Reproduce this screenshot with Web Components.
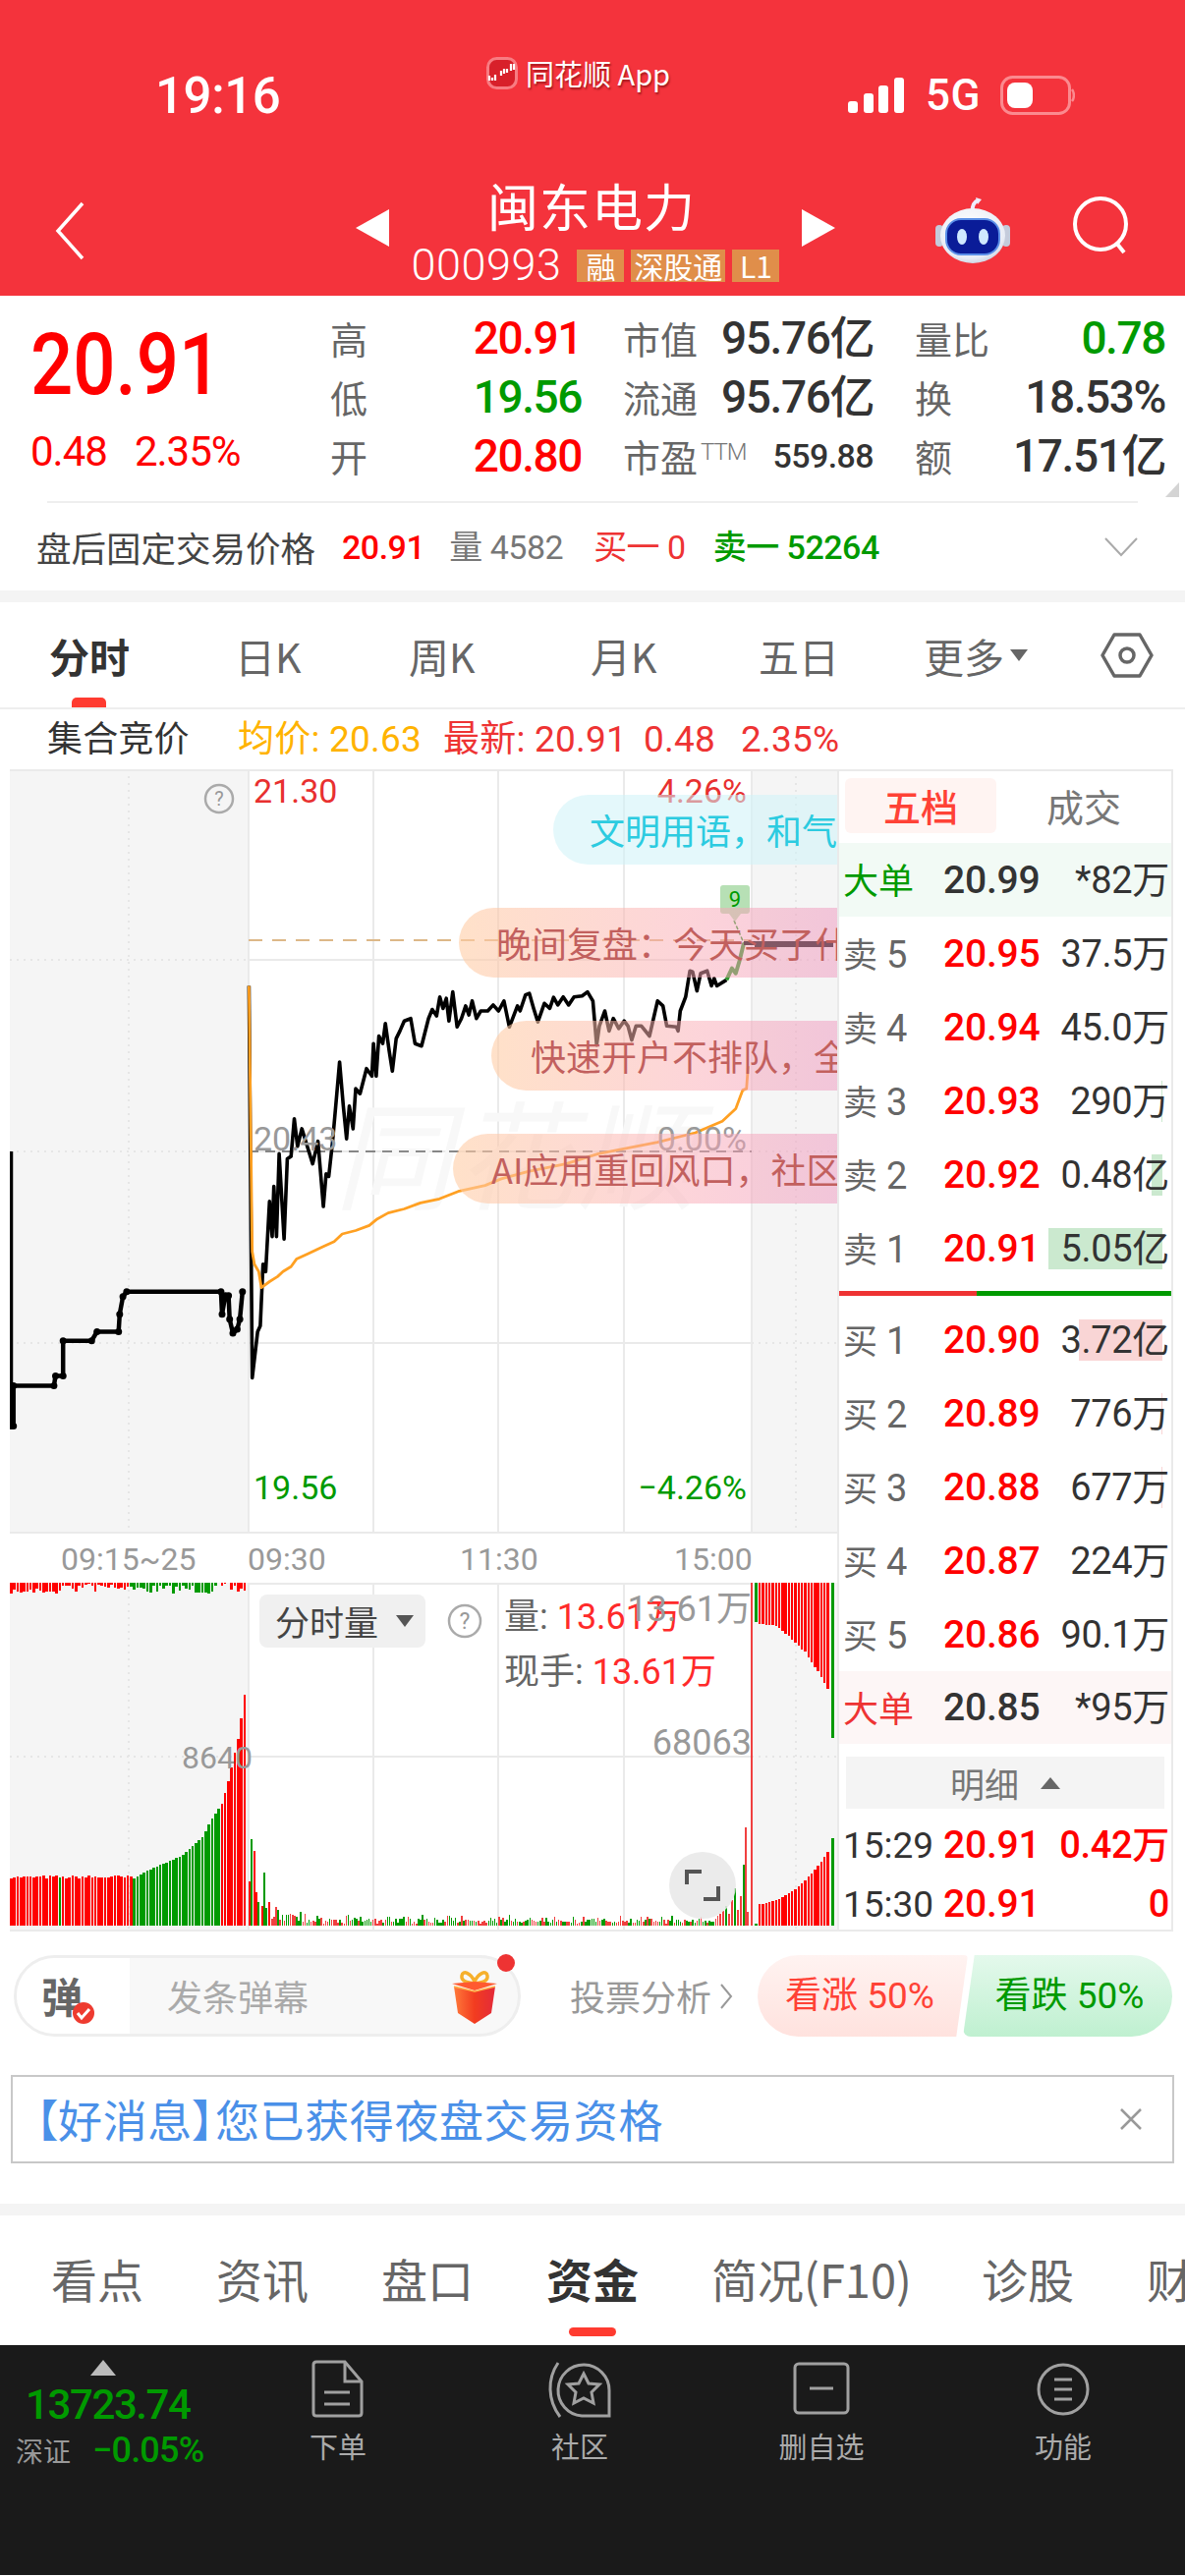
<!DOCTYPE html>
<html lang="zh">
<head>
<meta charset="utf-8">
<title>闽东电力</title>
<style>
  html, body { margin: 0; padding: 0; background: #fff; }
  body {
    width: 1206px;
    height: 2622px;
    overflow: hidden;
    font-family: Roboto, "Noto Sans CJK SC", sans-serif;
    color: #333;
  }
  .chart-row { display: flex; align-items: flex-start; }
</style>
</head>
<body>
  <status-bar></status-bar>
  <stock-header name="闽东电力" code="000993"></stock-header>
  <quote-panel></quote-panel>
  <after-hours></after-hours>
  <period-tabs></period-tabs>
  <auction-line></auction-line>
  <div class="chart-row">
    <time-chart></time-chart>
    <order-book></order-book>
  </div>
  <danmu-bar></danmu-bar>
  <notice-bar>【好消息】您已获得夜盘交易资格</notice-bar>
  <info-tabs></info-tabs>
  <bottom-nav></bottom-nav>

<script>
const RED = "#ff0000";
const GREEN = "#009a00";

class ShadowBase extends HTMLElement {
  constructor() {
    super();
    this.attachShadow({ mode: "open" });
  }
  connectedCallback() {
    this.shadowRoot.innerHTML = this.render();
    if (this.afterRender) this.afterRender();
  }
}

class StatusBar extends ShadowBase {
  render() {
    return `
      <style>
        :host { display: flex; height: 170px; background: #f4333c; color: #fff; box-sizing: border-box; }
        .time { width: 495px; box-sizing: border-box; padding: 68px 0 0 158px; font: 500 51px/60px Roboto, sans-serif; letter-spacing: -.4px; }
        .app { display: flex; align-items: center; gap: 8px; height: 34px; margin-top: 57px; font: 29px/34px "Noto Sans CJK SC", sans-serif; text-shadow: 1px 2px 2px rgba(90,0,0,.55); flex: 1; }
        .right { display: flex; align-items: center; gap: 20px; height: 44px; margin-top: 75px; padding-right: 112px; }
        .g5 { font: 500 44px/44px Roboto, sans-serif; letter-spacing: .5px; }
        .right svg:first-child { margin-right: 2px; }
      </style>
      <div class="time">19:16</div>
      <div class="app">
        <svg width="32" height="33" viewBox="0 0 32 33">
          <rect x="1.5" y="1.5" width="29" height="30" rx="9" fill="#d8202a" stroke="#f87c82" stroke-width="3"/>
          <path d="M3 24v-5M6 24v-3M9 24v-6M15 19v-5M18 17v-5M21 16v-4M25 14V7M28 13V7" stroke="#fff" stroke-width="2.2"/>
        </svg>
        <span>同花顺 App</span>
      </div>
      <div class="right">
        <svg width="57" height="36" viewBox="0 0 57 36" fill="#fff">
          <rect x="0" y="24" width="10" height="12" rx="3"/><rect x="16" y="16" width="10" height="20" rx="3"/>
          <rect x="31" y="8" width="10" height="28" rx="3"/><rect x="47" y="0" width="10" height="36" rx="3"/>
        </svg>
        <span class="g5">5G</span>
        <svg width="76" height="40" viewBox="0 0 76 40">
          <rect x="1.5" y="1.5" width="69" height="37" rx="11" fill="none" stroke="#fb8a8f" stroke-width="3"/>
          <rect x="7" y="7" width="26" height="26" rx="8" fill="#fff"/>
          <path d="M73 14c2.500 3 2.500 9 0 12" fill="none" stroke="#fb8a8f" stroke-width="2.500"/>
        </svg>
      </div>`;
  }
}

class StockHeader extends ShadowBase {
  render() {
    return `
      <style>
        :host { display: grid; grid-template-columns: 362px 488px 1fr; height: 131px; background: #f4333c; color: #fff; }
        .back { padding: 35px 0 0 55px; }
        .mid { display: flex; align-items: center; justify-content: space-between; height: 100%; padding-bottom: 8px; box-sizing: border-box; }
        .info { display: flex; flex-direction: column; align-items: center; }
        .name { font: 400 52px/62px "Noto Sans CJK SC", sans-serif; letter-spacing: 1px; margin: 2px 8px 0 0; }
        .sub { display: flex; align-items: center; gap: 7px; height: 34px; margin-top: 13px; }
        .code { font: 300 45px/34px Roboto, sans-serif; letter-spacing: .5px; margin-right: 9px; }
        .tag { display: block; height: 33px; padding: 0 3px; background: #e08e4a; font: 30px/33px "Noto Sans CJK SC", sans-serif; min-width: 42px; text-align: center; }
        .right { display: flex; gap: 64px; padding: 30px 0 0 102px; align-items: flex-start; }
      </style>
      <div class="back">
        <svg width="32" height="60" viewBox="0 0 32 60"><path d="M29 2L4 30l25 28" fill="none" stroke="#fff" stroke-width="3.500"/></svg>
      </div>
      <div class="mid">
        <svg width="34" height="38" viewBox="0 0 34 38"><path d="M34 0v38L0 19z" fill="#fff"/></svg>
        <div class="info">
          <div class="name">${this.getAttribute("name")}</div>
          <div class="sub">
            <span class="code">${this.getAttribute("code")}</span>
            <span class="tag">融</span><span class="tag">深股通</span><span class="tag">L1</span>
          </div>
        </div>
        <svg width="34" height="38" viewBox="0 0 34 38"><path d="M0 0v38l34-19z" fill="#fff"/></svg>
      </div>
      <div class="right">
        <svg width="76" height="70" viewBox="0 0 76 70" style="margin-top:-1px">
          <defs>
            <radialGradient id="h" cx=".45" cy=".35" r=".8"><stop offset="0" stop-color="#fff"/><stop offset=".7" stop-color="#e8ecf5"/><stop offset="1" stop-color="#aab3c8"/></radialGradient>
          </defs>
          <path d="M38 16c-1-6 1-9 5-11" fill="none" stroke="#eef" stroke-width="4"/>
          <path d="M41 2l6 2-4 5z" fill="#eef"/>
          <rect x="0" y="30" width="8" height="22" rx="4" fill="#c4cbdb"/><rect x="68" y="30" width="8" height="22" rx="4" fill="#c4cbdb"/>
          <ellipse cx="38" cy="41" rx="33" ry="28" fill="url(#h)"/>
          <rect x="11" y="24" width="54" height="36" rx="15" fill="#0a1c98" stroke="#5b8fe8" stroke-width="2"/>
          <ellipse cx="27" cy="42" rx="5" ry="8" fill="#cfe9ff"/><ellipse cx="49" cy="42" rx="5" ry="8" fill="#cfe9ff"/>
        </svg>
        <svg width="60" height="60" viewBox="0 0 60 60"><circle cx="28" cy="28" r="26" fill="none" stroke="#fff" stroke-width="4"/><path d="M44 47l8 10" stroke="#fff" stroke-width="4"/></svg>
      </div>`;
  }
}

class QuotePanel extends ShadowBase {
  render() {
    const cell = (label, value, color) =>
      `<div class="c"><span class="l">${label}</span><span class="v" style="color:${color}">${value}</span></div>`;
    return `
      <style>
        :host { display: block; position: relative; height: 211px; background: #fff; box-sizing: border-box; padding: 0 0 0 33px; }
        .wrap { display: flex; height: 210px; border-bottom: 0; }
        .price { width: 303px; color: ${RED}; flex: none; }
        .big { font: 500 87px/84px Roboto, sans-serif; transform: scaleX(.875); transform-origin: left; margin: 28px 0 0 -2px; }
        .chg { font: 400 42px/44px Roboto, sans-serif; letter-spacing: -1px; margin: 25px 0 0 -2px; display: flex; gap: 28px; }
        .grid { display: grid; grid-template-columns: 256px 255px 255px; column-gap: 42px; grid-auto-rows: 60px; padding-top: 13px; }
        .c { display: flex; justify-content: space-between; align-items: center; }
        .l { font: 38px/60px "Noto Sans CJK SC", sans-serif; color: #666; letter-spacing: 0; display: flex; align-items: baseline; }
        .v { font: 500 46px/60px Roboto, "Noto Sans CJK SC", sans-serif; letter-spacing: -1.4px; color: #333; }
        .ttm { font: 300 24px/24px Roboto, sans-serif; color: #777; margin-left: 3px; position: relative; top: -12px; letter-spacing: -1px; }
        .sep { position: absolute; left: 48px; right: 48px; bottom: 0; height: 2px; background: #eee; }
        .corner { position: absolute; right: 6px; top: 190px; width: 0; height: 0; border-left: 14px solid transparent; border-bottom: 15px solid #d4d4d4; }
      </style>
      <div class="wrap">
        <div class="price">
          <div class="big">20.91</div>
          <div class="chg"><span>0.48</span><span>2.35%</span></div>
        </div>
        <div class="grid">
          ${cell("高", "20.91", RED)}
          ${cell("市值", "95.76亿", "#333")}
          ${cell("量比", "0.78", GREEN)}
          ${cell("低", "19.56", GREEN)}
          ${cell("流通", "95.76亿", "#333")}
          ${cell("换", "18.53%", "#333")}
          ${cell("开", "20.80", RED)}
          <div class="c"><span class="l">市盈<span class="ttm">TTM</span></span><span class="v" style="font-size:34px;letter-spacing:-.6px">559.88</span></div>
          ${cell("额", "17.51亿", "#333")}
        </div>
      </div>
      <div class="corner"></div>
      <div class="sep"></div>`;
  }
}

class AfterHours extends ShadowBase {
  render() {
    return `
      <style>
        :host { display: flex; align-items: center; height: 89px; padding-left: 37px; padding-right: 48px; background: #fff; border-bottom: 12px solid #f4f4f4; font: 35.5px/40px "Noto Sans CJK SC", sans-serif; color: #444; padding-bottom: 0; }
        span { white-space: nowrap; }
        .t { width: 311px; }
        .n { font: 500 34px/40px Roboto, "Noto Sans CJK SC", sans-serif; letter-spacing: -.5px; }
        .a { margin-right: 31px; }
        svg { margin-left: auto; }
      </style>
      <span class="t">盘后固定交易价格</span>
      <span class="n a" style="color:${RED};margin-right:25px">20.91</span>
      <span class="n a" style="color:#777;font-weight:400">量 4582</span>
      <span class="n a" style="color:#ee3333;font-weight:400;margin-right:28px">买一 0</span>
      <span class="n" style="color:${GREEN}">卖一 52264</span>
      <svg width="34" height="20" viewBox="0 0 34 20"><path d="M1 1l16 17L33 1" fill="none" stroke="#aaa" stroke-width="2"/></svg>`;
  }
}

class PeriodTabs extends ShadowBase {
  render() {
    return `
      <style>
        :host { display: block; position: relative; height: 109px; background: #fff; box-sizing: border-box; border-bottom: 2px solid #eee; }
        .row { display: grid; grid-template-columns: 189px 177px 185px 171px 168px 177px 1fr; padding: 29px 0 0 50px; font: 41px/50px "Noto Sans CJK SC", sans-serif; color: #666; }
        .on { font-weight: 700; color: #333; }
        .more { display: flex; align-items: center; gap: 6px; }
        .more i { border: 9px solid transparent; border-top: 12px solid #666; border-bottom: 0; }
        .bar { position: absolute; left: 73px; bottom: 0; width: 35px; height: 10px; background: #ff3b30; border-radius: 5px 5px 0 0; }
        svg { display: block; margin: 2px 0 0 3px; }
      </style>
      <div class="row">
        <span class="on">分时</span><span>日K</span><span>周K</span><span>月K</span><span>五日</span>
        <span class="more">更多<i></i></span>
        <svg width="54" height="46" viewBox="0 0 54 46"><path d="M14 2h26l12 21-12 21H14L2 23z" fill="none" stroke="#666" stroke-width="3.500" stroke-linejoin="round"/><circle cx="27" cy="23" r="7" fill="none" stroke="#666" stroke-width="3.500"/></svg>
      </div>
      <div class="bar"></div>`;
  }
}

class AuctionLine extends ShadowBase {
  render() {
    return `
      <style>
        :host { display: flex; align-items: center; height: 61px; padding-left: 48px; background: #fff; font: 37px/44px "Noto Sans CJK SC", Roboto, sans-serif; color: #333; box-sizing: border-box; }
        .a { width: 194px; font-size: 36px; }
        span { white-space: nowrap; font-family: Roboto, "Noto Sans CJK SC", sans-serif; letter-spacing: .2px; }
      </style>
      <span class="a">集合竞价</span>
      <span style="color:#ffb300;width:209px">均价: 20.63</span>
      <span style="color:#ee3333;width:204px">最新: 20.91</span>
      <span style="color:#ee3333;width:99px">0.48</span>
      <span style="color:#ee3333">2.35%</span>`;
  }
}

const PRE_LINE = [[20,770],[20,1318],[25,1318],[25,1238],[100,1238],[103,1218],[117,1218],[117,1148],[170,1148],[180,1130],[220,1130],[222,1095],[228,1060],[235,1050],[410,1050],[412,1095],[418,1058],[424,1058],[426,1105],[432,1133],[440,1125],[445,1105],[450,1050]];
const PRICE_LINE = [[462,440],[468,1222],[478,1130],[483,1118],[488,995],[493,1010],[500,870],[505,940],[508,840],[513,940],[518,775],[527,945],[533,785],[540,780],[546,705],[552,760],[560,725],[570,760],[580,795],[590,750],[600,880],[605,815],[610,820],[617,750],[625,655],[630,592],[637,680],[643,745],[648,680],[655,725],[660,645],[668,655],[680,605],[690,620],[693,555],[698,620],[703,540],[710,555],[715,515],[722,570],[728,610],[735,545],[742,530],[750,510],[762,505],[770,555],[782,560],[795,505],[802,487],[810,500],[816,462],[822,485],[828,465],[833,510],[840,452],[848,522],[856,505],[864,480],[870,498],[876,470],[884,505],[892,490],[905,490],[915,478],[925,490],[935,470],[945,522],[960,480],[965,490],[975,458],[982,455],[990,485],[998,512],[1010,475],[1020,485],[1027,463],[1035,478],[1045,462],[1055,478],[1065,462],[1080,460],[1090,452],[1100,470],[1107,558],[1112,520],[1122,490],[1130,530],[1138,505],[1148,525],[1158,510],[1165,520],[1172,548],[1180,520],[1190,520],[1205,540],[1220,470],[1230,480],[1237,520],[1255,522],[1258,530],[1262,490],[1272,462],[1280,410],[1285,412],[1293,450],[1300,415],[1312,410],[1320,440],[1325,425],[1330,440],[1348,428]];
const GREEN_LINE = [[1348,428],[1358,405],[1365,415],[1372,390],[1380,355]];
const AVG_LINE = [[462,440],[468,970],[472,995],[480,1010],[485,1042],[500,1030],[515,1020],[525,1010],[540,1000],[550,985],[570,975],[600,960],[620,950],[635,935],[660,928],[685,918],[700,905],[720,893],[750,885],[780,873],[815,865],[850,850],[900,838],[930,825],[980,810],[1050,795],[1110,775],[1220,752],[1290,733],[1340,710],[1365,685],[1378,648],[1385,645],[1388,600]];

class TimeChart extends ShadowBase {
  render() {
    const px = ([x, y]) => [(x / 1.823).toFixed(1), (y / 1.96 - 4).toFixed(1)];
    const toPath = (pts) => "M" + pts.map((p) => px(p).join(" ")).join("L");
    const grid = (h, ys) => `
      <rect x="0" y="0" width="243" height="${h}" fill="#f5f5f5"/>
      <rect x="755" y="0" width="87" height="${h}" fill="#f5f5f5"/>
      <path d="M121 0V${h}M800 0V${h}" stroke="#e6e6e6" stroke-width="2" stroke-dasharray="2 5"/>
      ${ys.map((y) => `<path d="M0 ${y}H243M755 ${y}H842" stroke="#e6e6e6" stroke-width="2" stroke-dasharray="2 5"/>`).join("")}
      ${ys.map((y) => `<path d="M243 ${y}H755" stroke="#eaeaea" stroke-width="2"/>`).join("")}
      <path d="M243 0V${h}M370 0V${h}M497 0V${h}M625 0V${h}M755 0V${h}" stroke="#eaeaea" stroke-width="2"/>
      <path d="M0 1H842M0 ${h - 1}H842" stroke="#eaeaea" stroke-width="2"/>`;
    const dots = PRE_LINE.slice(1).map((p) => {
      const [cx, cy] = px(p);
      return `<circle cx="${cx}" cy="${cy}" r="3.500"/>`;
    }).join("");
    return `
      <style>
        :host { display: block; width: 842px; margin-left: 10px; flex: none; font-family: Roboto, "Noto Sans CJK SC", sans-serif; }
        .price { position: relative; height: 778px; overflow: hidden; }
        .axis { position: relative; height: 50px; font: 32px/50px Roboto, sans-serif; color: #999; }
        .axis span { position: absolute; top: 1px; }
        .vol { position: relative; height: 355px; overflow: hidden; }
        svg { position: absolute; left: 0; top: 0; display: block; }
        #vol { shape-rendering: crispEdges; }
        .t { position: absolute; font-size: 34px; line-height: 40px; white-space: nowrap; }
        .wm { position: absolute; left: 330px; top: 322px; font: italic 400 120px/130px "Noto Sans CJK SC", sans-serif; color: #f8f8f8; letter-spacing: 4px; white-space: nowrap; }
        .dm { position: absolute; right: 0; height: 71px; border-radius: 36px 0 0 36px; overflow: hidden; font: 36px/71px "Noto Sans CJK SC", sans-serif; white-space: nowrap; box-sizing: border-box; background: linear-gradient(90deg, rgba(255,205,165,.6), rgba(250,170,180,.5) 60%, rgba(238,150,190,.5)); color: #c2605e; }
        .flag { position: absolute; left: 723px; top: 118px; width: 30px; height: 29px; background: #b7e0b5; border-radius: 3px; color: ${GREEN}; font: 22px/29px Roboto, sans-serif; text-align: center; }
        .flag::after { content: ""; position: absolute; left: 9px; top: 29px; border: 6px solid transparent; border-top: 8px solid #b7e0b5; border-bottom: 0; }
        .pill { position: absolute; left: 254px; top: 12px; width: 169px; height: 54px; background: #f0f0f0; border-radius: 8px; font: 35px/54px "Noto Sans CJK SC", sans-serif; color: #444; padding-left: 16px; box-sizing: border-box; }
        .pill i { position: absolute; right: 12px; top: 21px; border: 9px solid transparent; border-top: 12px solid #555; border-bottom: 0; }
        .exp { position: absolute; left: 671px; top: 274px; width: 68px; height: 68px; border-radius: 50%; background: rgba(232,232,232,.88); }
      </style>
      <div class="price">
        <svg width="842" height="778" viewBox="0 0 842 778">
          ${grid(778, [194, 389, 584])}
        </svg>
        <div class="wm">同花顺</div>
        <svg width="852" height="778" viewBox="0 0 852 778" style="left:-10px">
          <path d="M253 174H765" stroke="#ddb888" stroke-width="2" stroke-dasharray="14 10" fill="none"/>
          <path d="M253 389H765" stroke="#666" stroke-width="1.500" stroke-dasharray="10 7" fill="none"/>
          <path d="${toPath(PRE_LINE)}" fill="none" stroke="#000" stroke-width="4.500" stroke-linejoin="round"/>
          <g fill="#000">${dots}</g>
          <path d="${toPath(PRICE_LINE)}" fill="none" stroke="#000" stroke-width="3.600" stroke-linejoin="round"/>
          <path d="${toPath(AVG_LINE)}" fill="none" stroke="#ffa022" stroke-width="2.800" stroke-linejoin="round"/>
          <path d="${toPath(GREEN_LINE)}" fill="none" stroke="#2f9a2f" stroke-width="4" stroke-linejoin="round"/>
          <path d="M747 154L757 177" stroke="#2f9a2f" stroke-width="1.500" stroke-dasharray="4 2"/>
          <path d="M757 177H768" stroke="#000" stroke-width="4"/>
          <path d="M768 178H848" stroke="#111" stroke-width="6"/>
        </svg>
        <div class="flag">9</div>
        <svg width="34" height="34" viewBox="0 0 34 34" style="left:196px;top:13px">
          <circle cx="17" cy="17" r="14" fill="none" stroke="#aaa" stroke-width="2.500"/>
          <text x="17" y="24" text-anchor="middle" font-size="20" fill="#999" font-family="Roboto">?</text>
        </svg>
        <span class="t" style="left:248px;top:2px;color:#e83030">21.30</span>
        <span class="t" style="right:92px;top:2px;color:#e83030">4.26%</span>
        <span class="t" style="left:248px;top:356px;color:#999">20.43</span>
        <span class="t" style="right:92px;top:356px;color:#999">0.00%</span>
        <span class="t" style="left:248px;top:711px;color:${GREEN}">19.56</span>
        <span class="t" style="right:92px;top:711px;color:${GREEN}">−4.26%</span>
        <div class="dm" style="left:553px;top:26px;background:rgba(205,242,248,.55);color:#2ccbe0;padding-left:37px">文明用语，和气</div>
        <div class="dm" style="left:457px;top:141px;padding-left:38px">晚间复盘：今天买了什么</div>
        <div class="dm" style="left:490px;top:256px;padding-left:40px">快速开户不排队，全程线上</div>
        <div class="dm" style="left:451px;top:371px;padding-left:39px">AI应用重回风口，社区热议</div>
      </div>
      <div class="axis">
        <span style="left:52px">09:15~25</span><span style="left:242px">09:30</span><span style="left:458px">11:30</span><span style="left:676px">15:00</span>
      </div>
      <div class="vol">
        <svg id="vol" width="842" height="355" viewBox="0 0 842 355"></svg>
        <div class="pill">分时量<i></i></div>
        <svg width="36" height="36" viewBox="0 0 36 36" style="left:445px;top:21px">
          <circle cx="18" cy="18" r="16" fill="none" stroke="#aaa" stroke-width="2.500"/>
          <text x="18" y="26" text-anchor="middle" font-size="23" fill="#999" font-family="Roboto">?</text>
        </svg>
        <span class="t" style="left:503px;top:15px;font-size:36px;color:#666">量: <span style="color:#ff2a2a">13.61万</span></span>
        <span class="t" style="left:503px;top:71px;font-size:36px;color:#666">现手: <span style="color:#ff2a2a">13.61万</span></span>
        <span class="t" style="right:87px;top:7px;font-size:36px;color:#999">13.61万</span>
        <span class="t" style="right:87px;top:143px;font-size:36px;color:#999">68063</span>
        <span class="t" style="left:175px;top:158px;font-size:32px;color:#999">8640</span>
        <div class="exp">
          <svg width="68" height="68" viewBox="0 0 68 68"><path d="M18 33V20h15M50 35v13H35" fill="none" stroke="#555" stroke-width="4"/></svg>
        </div>
      </div>`;
  }

  afterRender() {
    // volume bars are fake but seeded, so every run gives the same picture
    let seed = 7;
    const rnd = () => (seed = (seed * 16807) % 2147483647) / 2147483647;
    const base = 349;
    let out = "";
    const bar = (x, top, h, c, w) => {
      out += `<rect x="${x.toFixed(1)}" y="${top.toFixed(1)}" width="${w}" height="${h.toFixed(1)}" fill="${c}"/>`;
    };
    out += `<rect x="0" y="0" width="243" height="355" fill="#f5f5f5"/><rect x="755" y="0" width="87" height="355" fill="#f5f5f5"/>`;
    [177].forEach((y) => {
      out += `<path d="M0 ${y}H243M755 ${y}H842" stroke="#e6e6e6" stroke-width="2" stroke-dasharray="2 5"/><path d="M243 ${y}H755" stroke="#eaeaea" stroke-width="2"/>`;
    });
    out += `<path d="M121 0V355M800 0V355" stroke="#e6e6e6" stroke-width="2" stroke-dasharray="2 5"/><path d="M243 0V355M370 0V355M497 0V355M625 0V355" stroke="#eaeaea" stroke-width="2"/><path d="M0 354H842M243 1H755" stroke="#eaeaea" stroke-width="2"/>`;

    // pre-market bars
    const curve = [[125,48],[135,54],[175,72],[195,90],[205,110],[215,125],[222,150],[232,195],[238,238]];
    const preH = (x) => {
      let h = 48;
      curve.forEach(([cx, ch], i) => {
        if (x >= cx) {
          const n = curve[i + 1];
          h = n ? ch + ((x - cx) / (n[0] - cx)) * (n[1] - ch) : ch;
        }
      });
      return h;
    };
    for (let x = 0; x < 239; x += 3.3) {
      const isGreen = (x > 125 && x < 213) || (x > 48 && x < 52);
      const h = preH(x) + (x < 125 ? rnd() * 3 : 0);
      bar(x, base - h, h, isGreen ? GREEN : RED, 2.600);
      const t = x < 50 ? 6 + rnd() * 5 : x < 120 ? rnd() * 10 : x < 200 ? 2 + rnd() * 9 : rnd() * 12;
      bar(x, 0, t, x > 122 && x < 212 ? GREEN : RED, 2.600);
    }

    // session bars
    const head = [[243,45],[245,88],[248,76],[250,34],[252,24],[256,20],[258,54],[260,18],[263,24]];
    head.forEach(([x, h], i) => bar(x, base - h, h, i % 3 === 1 || i === 6 ? GREEN : RED, 2));
    for (let x = 266; x < 720; x += 2.1) {
      const decay = x < 300 ? 14 - (x - 266) * 0.2 : 3;
      const h = 2 + rnd() * rnd() * 8 + rnd() * decay;
      bar(x, base - h, h, rnd() > 0.5 ? GREEN : "#f04040", 1.500);
    }
    [[722,12],[725,15],[728,20],[731,12],[734,26],[737,38],[740,16],[743,30],[746,62],[748,100],[750,14]].forEach(([x, h], i) =>
      bar(x, base - h, h, i % 3 === 2 ? GREEN : "#f04040", 1.800));
    bar(754, 0, 349, "#f04040", 1.800);

    // post-market bars
    bar(758, 0, 40, GREEN, 3);
    bar(758, base - 2, 2, GREEN, 3);
    for (let i = 0; i < 22; i++) {
      const x = 762 + i * 3.3;
      bar(x, 0, 40 + i * i * 0.15 + rnd() * 3, RED, 2.400);
      bar(x, base - 22 - i * i * 0.11 - i * 0.2, 22 + i * i * 0.11 + i * 0.2, RED, 2.400);
    }
    bar(836, 0, 158, GREEN, 3);
    bar(836, base - 89, 89, GREEN, 3);
    this.shadowRoot.getElementById("vol").innerHTML = out;
  }
}

class OrderBook extends ShadowBase {
  render() {
    const row = (label, no, price, qty, opts = {}) => `
      <div class="r ${opts.cls || ""}" style="height:${opts.h || 75}px">
        ${opts.depth ? `<i class="d" style="left:${opts.depth[0]}px;width:${opts.depth[1]}px;height:${opts.depth[2]}px;background:${opts.depth[3]}"></i>` : ""}
        <span class="l" ${opts.lc ? `style="color:${opts.lc};font-size:36px"` : ""}>${label}<b>${no}</b></span>
        <span class="p" ${opts.pc ? `style="color:${opts.pc}"` : ""}>${price}</span>
        <span class="q">${qty}</span>
      </div>`;
    const sell = "#cbe9cf";
    const buy = "#f9d5d5";
    return `
      <style>
        :host { display: block; width: 342px; height: 1183px; margin-top: 0; box-sizing: border-box; border: 2px solid #eaeaea; border-bottom-width: 2px; flex: none; background: #fff; font-family: Roboto, "Noto Sans CJK SC", sans-serif; }
        .tabs { display: flex; height: 73px; padding: 7px 0 0 6px; box-sizing: border-box; font: 38px/56px "Noto Sans CJK SC", sans-serif; }
        .tabs span { display: block; height: 56px; text-align: center; }
        .on { width: 154px; background: #fff4f2; color: #ff4236; border-radius: 6px; font-weight: 500; }
        .off { width: 178px; color: #777; }
        .r { position: relative; display: flex; align-items: center; padding: 0 2px 0 4px; box-sizing: border-box; }
        .d { position: absolute; top: 50%; transform: translateY(-50%); }
        .l { position: relative; width: 102px; flex: none; font: 35px/40px "Noto Sans CJK SC", sans-serif; color: #666; white-space: nowrap; }
        .l b { font: 400 38px/40px Roboto, sans-serif; margin-left: 9px; }
        .p { position: relative; font: 500 39px/40px Roboto, sans-serif; color: ${RED}; letter-spacing: -.2px; }
        .q { position: relative; margin-left: auto; font: 400 38px/40px Roboto, "Noto Sans CJK SC", sans-serif; color: #333; letter-spacing: -.3px; }
        .big-s { background: #f2faf5; margin-top: 0; }
        .big-b { background: #fdf6f6; }
        .split { display: flex; height: 5px; margin: 6px 0 7px; }
        .split i { display: block; height: 5px; }
        .more { display: flex; align-items: center; justify-content: center; gap: 22px; height: 53px; margin: 13px 7px 7px; background: #f4f4f4; font: 35px/53px "Noto Sans CJK SC", sans-serif; color: #777; }
        .more i { border: 10px solid transparent; border-bottom: 12px solid #666; border-top: 0; }
        .tick { height: 60px; }
        .tick .l { font: 400 37px/40px Roboto, sans-serif; color: #333; }
        .tick .q { color: ${RED}; font-weight: 500; }
      </style>
      <div class="tabs"><span class="on">五档</span><span class="off">成交</span></div>
      ${row("大单", "", "20.99", "*82万", { cls: "big-s", lc: GREEN, pc: "#333" })}
      ${row("卖", "5", "20.95", "37.5万")}
      ${row("卖", "4", "20.94", "45.0万")}
      ${row("卖", "3", "20.93", "290万", { depth: [328, 1, 42, sell] })}
      ${row("卖", "2", "20.92", "0.48亿", { depth: [318, 11, 42, sell] })}
      ${row("卖", "1", "20.91", "5.05亿", { depth: [213, 116, 42, sell] })}
      <div class="split"><i style="width:140px;background:#ee3333"></i><i style="flex:1;background:${GREEN}"></i></div>
      ${row("买", "1", "20.90", "3.72亿", { depth: [244, 85, 42, buy] })}
      ${row("买", "2", "20.89", "776万", { depth: [328, 1, 42, buy] })}
      ${row("买", "3", "20.88", "677万", { depth: [328, 1, 42, buy] })}
      ${row("买", "4", "20.87", "224万")}
      ${row("买", "5", "20.86", "90.1万")}
      ${row("大单", "", "20.85", "*95万", { cls: "big-b", lc: "#ee3333", pc: "#333", h: 74 })}
      <div class="more">明细<i></i></div>
      ${row("15:29", "", "20.91", "0.42万", { cls: "tick", h: 60 })}
      ${row("15:30", "", "20.91", "0", { cls: "tick", h: 60 })}`;
  }
}

class DanmuBar extends ShadowBase {
  render() {
    return `
      <style>
        :host { display: flex; align-items: center; height: 83px; margin: 24px 13px 0 14px; font-family: "Noto Sans CJK SC", sans-serif; }
        .box { position: relative; display: flex; width: 516px; height: 83px; box-sizing: border-box; border: 3px solid #eee; border-radius: 42px; background: #f8f8f8; flex: none; }
        .dan { position: relative; width: 115px; height: 100%; background: #fff; border-radius: 40px 0 0 40px; font: 700 42px/75px "Noto Sans CJK SC", sans-serif; color: #666; padding-left: 25px; box-sizing: border-box; }
        .dan svg { position: absolute; left: 56px; top: 44px; }
        .ph { font: 36px/77px "Noto Sans CJK SC", sans-serif; color: #aaa; padding-left: 38px; }
        .gift { position: absolute; left: 441px; top: 12px; }
        .dot { position: absolute; right: 3px; top: -4px; width: 18px; height: 18px; border-radius: 50%; background: #ee3333; }
        .vote { flex: none; padding-left: 50px; width: 191px; font: 36px/83px "Noto Sans CJK SC", sans-serif; color: #999; white-space: nowrap; display: flex; align-items: center; gap: 8px; }
        .btns { display: flex; flex: none; }
        .up, .down { height: 83px; font: 37px/83px Roboto, "Noto Sans CJK SC", sans-serif; text-align: center; white-space: nowrap; }
        .up { width: 214px; color: #ff4236; background: linear-gradient(#fff3f1, #ffe2de); border-radius: 42px 4px 8px 42px; clip-path: polygon(0 0, 100% 0, 94.500% 100%, 0 100%); padding-right: 6px; box-sizing: border-box; }
        .down { width: 213px; margin-left: -5px; color: ${GREEN}; background: linear-gradient(#e4f9ec, #bff0d0); border-radius: 8px 42px 42px 8px; clip-path: polygon(5.500% 0, 100% 0, 100% 100%, 0 100%); padding-left: 4px; box-sizing: border-box; }
      </style>
      <div class="box">
        <div class="dan">弹
          <svg width="24" height="24" viewBox="0 0 24 24"><circle cx="12" cy="12" r="11" fill="#ee3b30"/><path d="M6 12l4 5 8-9" fill="none" stroke="#fff" stroke-width="3"/></svg>
        </div>
        <div class="ph">发条弹幕</div>
        <svg class="gift" width="50" height="56" viewBox="0 0 50 56">
          <defs><linearGradient id="g" x1="0" x2="1"><stop offset="0" stop-color="#ff7a3a"/><stop offset=".5" stop-color="#f23c20"/><stop offset="1" stop-color="#e42a3a"/></linearGradient></defs>
          <path d="M25 12c-4-9-12-12-13-6s6 7 13 8c7-1 14-2 13-8s-9-3-13 6z" fill="none" stroke="#f6b02c" stroke-width="3.500"/>
          <path d="M2 14l23-2 23 2-23 7z" fill="#ff5a30"/>
          <path d="M4 17l21 5 21-5-4 27-17 11L8 44z" fill="url(#g)"/>
          <path d="M4 17l21 5 21-5" fill="none" stroke="#ffb24a" stroke-width="1.500"/>
        </svg>
        <div class="dot"></div>
      </div>
      <div class="vote">投票分析
        <svg width="14" height="28" viewBox="0 0 14 28"><path d="M2 2l10 12L2 26" fill="none" stroke="#999" stroke-width="2"/></svg>
      </div>
      <div class="btns"><div class="up">看涨 50%</div><div class="down">看跌 50%</div></div>`;
  }
}

class NoticeBar extends ShadowBase {
  render() {
    return `
      <style>
        :host { display: flex; align-items: center; justify-content: space-between; height: 90px; margin: 39px 11px 0 11px; border: 2px solid #c8c8c8; box-sizing: border-box; padding: 0 30px 0 23px; font: 45px/56px "Noto Sans CJK SC", sans-serif; font-feature-settings: "palt"; letter-spacing: .6px; color: #4a90e8; }
      </style>
      <span><slot></slot></span>
      <svg width="24" height="24" viewBox="0 0 24 24"><path d="M2 2l20 20M22 2L2 22" stroke="#999" stroke-width="2.500"/></svg>`;
  }
}

class InfoTabs extends ShadowBase {
  render() {
    return `
      <style>
        :host { display: block; position: relative; height: 144px; margin-top: 41px; border-top: 12px solid #f4f4f4; background: #fff; overflow: hidden; box-sizing: border-box; }
        .row { display: flex; gap: 74px; padding: 34px 0 0 52px; font: 47px/60px "Noto Sans CJK SC", Roboto, sans-serif; color: #666; white-space: nowrap; }
        .on { font-weight: 700; color: #333; }
        .bar { position: absolute; left: 579px; top: 114px; width: 48px; height: 9px; background: #ff3b30; border-radius: 5px; }
      </style>
      <div class="row">
        <span>看点</span><span>资讯</span><span>盘口</span><span class="on">资金</span><span>简况(F10)</span><span style="margin-left:-3px">诊股</span><span>财务</span>
      </div>
      <div class="bar"></div>`;
  }
}

class BottomNav extends ShadowBase {
  render() {
    const item = (icon, label) => `<div class="it">${icon}<span>${label}</span></div>`;
    const s = `fill="none" stroke="#a0a0a0" stroke-width="3"`;
    return `
      <style>
        :host { display: grid; grid-template-columns: 221px repeat(4, 246px); height: 234px; background: #1a1a1a; color: #aaa; font-family: Roboto, "Noto Sans CJK SC", sans-serif; }
        .idx { display: flex; flex-direction: column; padding: 15px 0 0 16px; box-sizing: border-box; }
        .tri { width: 0; height: 0; margin-left: 76px; border: 13px solid transparent; border-bottom: 16px solid #bbb; border-top: 0; }
        .val { font: 500 42px/44px Roboto, sans-serif; color: ${GREEN}; margin: 8px 0 0 10px; letter-spacing: -1.4px; }
        .low { display: flex; align-items: center; gap: 22px; margin-top: 4px; font: 28px/40px "Noto Sans CJK SC", sans-serif; color: #999; white-space: nowrap; }
        .low b { font: 500 36px/40px Roboto, sans-serif; color: ${GREEN}; letter-spacing: -.8px; }
        .it { display: flex; flex-direction: column; align-items: center; padding-top: 15px; box-sizing: border-box; }
        .it svg { display: block; height: 60px; }
        .it span { font: 29px/38px "Noto Sans CJK SC", sans-serif; color: #aaa; margin-top: 8px; }
      </style>
      <div class="idx">
        <div class="tri"></div>
        <div class="val">13723.74</div>
        <div class="low">深证<b>−0.05%</b></div>
      </div>
      ${item(`<svg width="54" height="60" viewBox="0 0 54 60"><path d="M5 2h29l17 20v32c0 2-1 3-3 3H5c-2 0-3-1-3-3V5c0-2 1-3 3-3z" ${s}/><path d="M34 2v20h17M13 33h26M13 45h26" ${s}/></svg>`, "下单")}
      ${item(`<svg width="64" height="60" viewBox="0 0 64 60"><path d="M62 57H34A26 26 0 1 1 62 31z" ${s}/><path d="M36 14l5 10 11 1-8 8 2 11-10-5-10 5 2-11-8-8 11-1z" ${s}/><path d="M10 3C-1 19-1 41 12 58" ${s}/></svg>`, "社区")}
      ${item(`<svg width="58" height="60" viewBox="0 0 58 60"><rect x="2" y="4" width="54" height="50" rx="4" ${s}/><path d="M17 29h24" ${s}/></svg>`, "删自选")}
      ${item(`<svg width="56" height="60" viewBox="0 0 56 60"><circle cx="28" cy="30" r="25" ${s}/><path d="M19 20h18M19 30h18M19 40h18" ${s}/></svg>`, "功能")}`;
  }
}

customElements.define("status-bar", StatusBar);
customElements.define("stock-header", StockHeader);
customElements.define("quote-panel", QuotePanel);
customElements.define("after-hours", AfterHours);
customElements.define("period-tabs", PeriodTabs);
customElements.define("auction-line", AuctionLine);
customElements.define("time-chart", TimeChart);
customElements.define("order-book", OrderBook);
customElements.define("danmu-bar", DanmuBar);
customElements.define("notice-bar", NoticeBar);
customElements.define("info-tabs", InfoTabs);
customElements.define("bottom-nav", BottomNav);
</script>
</body>
</html>
